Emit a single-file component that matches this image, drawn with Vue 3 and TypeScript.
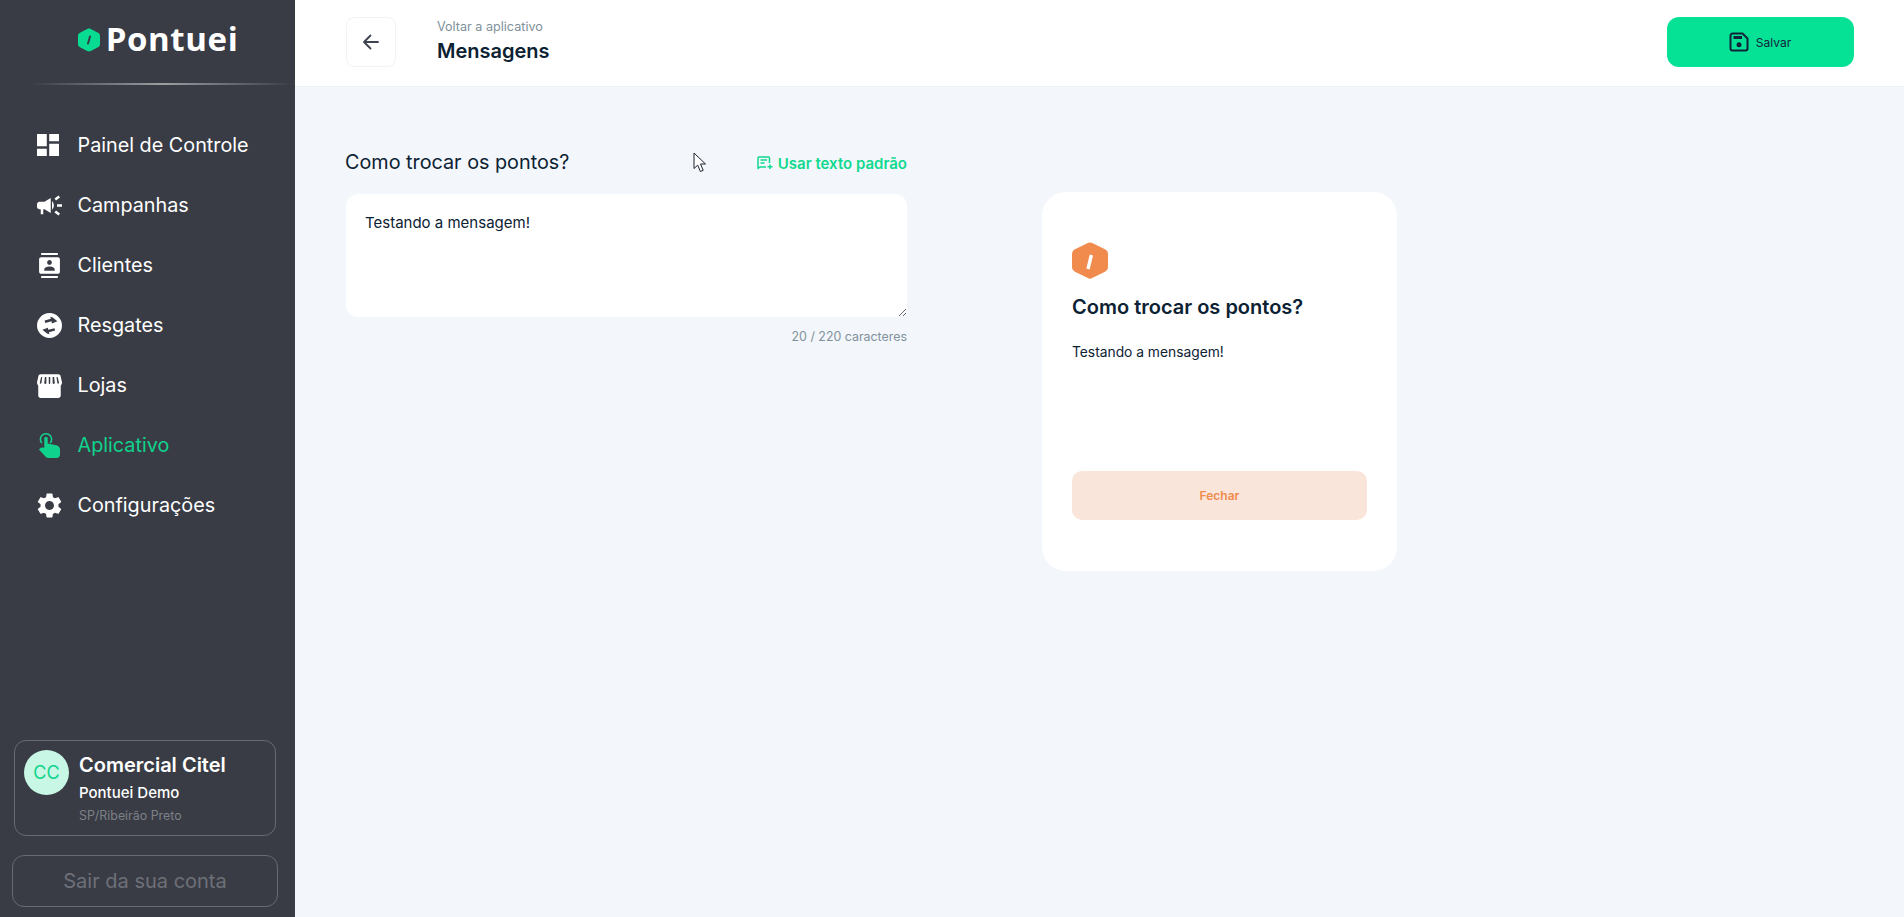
<script setup lang="ts">
import { ref, computed } from 'vue'

interface NavItem { label: string; d: string; box: string; size: number; active?: boolean }

const nav: NavItem[] = [
  { label: 'Painel de Controle', box: '3 3 18 18', size: 22, d: 'M3 13h8V3H3v10zm0 8h8v-6H3v6zm10 0h8V11h-8v10zm0-18v6h8V3h-8z' },
  { label: 'Campanhas', box: '2 2 20 20', size: 25, d: 'M18 11v2h4v-2h-4zm-2 6.61c.96.71 2.21 1.65 3.2 2.39.4-.53.8-1.07 1.2-1.6-.99-.74-2.24-1.68-3.2-2.4-.4.54-.8 1.08-1.2 1.61zM20.4 5.6c-.4-.53-.8-1.07-1.2-1.6-.99.74-2.24 1.68-3.2 2.4.4.53.8 1.07 1.2 1.6.96-.72 2.21-1.65 3.2-2.4zM4 9c-1.1 0-2 .9-2 2v2c0 1.1.9 2 2 2h1v4h2v-4h1l5 3V6L8 9H4zm11.5 3c0-1.33-.58-2.53-1.5-3.35v6.69c.92-.81 1.5-2.01 1.5-3.34z' },
  { label: 'Clientes', box: '2 0 20 24', size: 25, d: 'M20 0H4v2h16V0zM4 24h16v-2H4v2zM20 4H4c-1.1 0-2 .9-2 2v12c0 1.1.9 2 2 2h16c1.1 0 2-.9 2-2V6c0-1.1-.9-2-2-2zm-8 2.75c1.24 0 2.25 1.01 2.25 2.25s-1.01 2.25-2.25 2.25S9.75 10.24 9.75 9 10.76 6.75 12 6.75zM17 17H7v-1.5c0-1.67 3.33-2.5 5-2.5s5 .83 5 2.5V17z' },
  { label: 'Resgates', box: '2 2 20 20', size: 25, d: 'M12 2a10 10 0 1 0 0 20 10 10 0 0 0 0-20zm2.6 3.6 3.7 3-4.4 1.7-.3-1.7-5 1.3-.5-1.9 5-1.4-.5-1.600zM10 18.400l-3.700-3 4.400-1.700.3 1.700 5-1.300.5 1.900-5 1.400.5 1.600z' },
  { label: 'Lojas', box: '2 2 20 20', size: 25, d: 'M5 3h14c1 0 1.7.6 1.9 1.5l1 4.4c.3 1.3-.2 2.5-.9 3.2V20c0 1.1-.9 2-2 2H5c-1.100 0-2-.9-2-2v-7.900c-.7-.7-1.200-1.900-.9-3.200l1-4.400C3.300 3.600 4 3 5 3zm.3 2.200-1 4.200c-.1.500 0 1 .4 1.200.4 0 .8-.3.9-.8l.6-4.600H5.300zm3 0-.5 4.600c0 .5.300.9.800.9.500 0 .9-.4.900-1V5.200H8.300zm3.700 0h-.6V9.700c0 .6.200 1 .6 1s.6-.4.600-1V5.200H12zm2.500 0V9.700c0 .6.400 1 .9 1 .500 0 .800-.4.800-.9l-.5-4.600h-1.200zm3.100 0 .6 4.600c.1.500.5.800.9.800.4-.2.5-.7.400-1.200l-1-4.200h-.9z' },
  { label: 'Aplicativo', box: '0 0 21 25', size: 25, active: true, d: 'M7 0a6.300 6.300 0 0 1 4.700 10.500l-1.100-1A4.800 4.800 0 1 0 3.400 9.500l-1.100 1A6.300 6.300 0 0 1 7 0zM7 3.700c1 0 1.700.8 1.700 1.800v5.100l8.500 1.600c2.200.4 3.800 2 3.800 4.100V21.500c0 2-1.500 3.500-3.500 3.500H9.500c-1 0-1.900-.4-2.600-1.100L0 16.500l1.300-1.300c.7-.7 1.600-1 2.500-.7l1.500.3V5.500c0-1 .7-1.800 1.700-1.800z' },
  { label: 'Configurações', box: '2.500 2 19 20', size: 25, d: 'M19.140 12.940c.04-.3.06-.61.06-.94 0-.32-.02-.64-.07-.94l2.030-1.580c.18-.14.23-.41.12-.61l-1.920-3.320c-.12-.22-.37-.29-.59-.22l-2.390.96c-.5-.38-1.030-.7-1.620-.94l-.36-2.540c-.04-.24-.24-.41-.48-.41h-3.840c-.24 0-.43.17-.47.41l-.36 2.540c-.59.24-1.130.57-1.620.94l-2.390-.96c-.22-.08-.47 0-.59.22L2.740 8.870c-.12.21-.08.47.12.61l2.030 1.580c-.05.3-.09.63-.09.94s.02.64.07.94l-2.030 1.580c-.18.14-.23.41-.12.61l1.920 3.320c.12.22.37.29.59.22l2.390-.96c.5.38 1.030.7 1.620.94l.36 2.540c.05.24.24.41.48.41h3.840c.24 0 .44-.17.47-.41l.36-2.540c.59-.24 1.130-.56 1.620-.94l2.390.96c.22.08.47 0 .59-.22l1.920-3.320c.12-.22.07-.47-.12-.61l-2.010-1.580zM12 15.600c-1.980 0-3.600-1.620-3.600-3.600s1.620-3.600 3.600-3.600 3.600 1.620 3.600 3.600-1.620 3.600-3.600 3.600z' },
]

const message = ref('Testando a mensagem!')
const count = computed(() => message.value.length)
</script>

<template>
  <div class="page">
    <aside class="sidebar">
      <div class="brand">
        <svg class="brand-mark" width="22" height="24" viewBox="0 0 22 24">
          <path d="M9.200 1 2 4.800C.800 5.400 0 6.600 0 8v8c0 1.400.8 2.600 2 3.200L9.200 23c1.100.6 2.500.6 3.600 0l7.200-3.800c1.200-.6 2-1.800 2-3.200V8c0-1.400-.8-2.600-2-3.200L12.800 1c-1.100-.6-2.500-.6-3.600 0z" fill="#08dc92" />
          <path d="M12 8.500 10 15.500" stroke="#393c45" stroke-width="2" stroke-linecap="round" />
        </svg>
        <span class="brand-name">Pontuei</span>
      </div>
      <div class="brand-rule"></div>

      <nav class="nav">
        <a v-for="item in nav" :key="item.label" class="nav-item" :class="{ active: item.active }">
          <span class="nav-icon">
            <svg :width="item.size" :height="item.size" :viewBox="item.box" fill="currentColor">
              <path :d="item.d" fill-rule="evenodd" />
            </svg>
          </span>
          <span>{{ item.label }}</span>
        </a>
      </nav>

      <div class="account">
        <div class="user-card">
          <div class="avatar">CC</div>
          <div class="user-info">
            <div class="user-name">Comercial Citel</div>
            <div class="user-org">Pontuei Demo</div>
            <div class="user-place">SP/Ribeirão Preto</div>
          </div>
        </div>
        <button class="logout" type="button">Sair da sua conta</button>
      </div>
    </aside>

    <div class="content">
      <header class="topbar">
        <button class="back" type="button" aria-label="Voltar">
          <svg width="20" height="20" viewBox="0 0 20 20" fill="none" stroke="#3d4450" stroke-width="1.800" stroke-linecap="round" stroke-linejoin="round">
            <path d="M17 10H3.500M9.500 3.500 3 10l6.500 6.500" />
          </svg>
        </button>
        <div class="crumbs">
          <div class="crumb">Voltar a aplicativo</div>
          <h1 class="page-title">Mensagens</h1>
        </div>
        <button class="save" type="button">
          <svg width="20" height="20" viewBox="0 0 20 20" fill="none">
            <path d="M3.500 1.500h10l5 5v10a2 2 0 0 1-2 2h-13a2 2 0 0 1-2-2v-13a2 2 0 0 1 2-2z" stroke="#10243a" stroke-width="2" stroke-linejoin="round" />
            <rect x="4.500" y="4" width="8.500" height="3" fill="#10243a" />
            <circle cx="10" cy="12.800" r="2.500" fill="#10243a" />
          </svg>
          <span>Salvar</span>
        </button>
      </header>

      <main class="main">
        <section class="editor">
          <div class="editor-head">
            <h2 class="editor-title">Como trocar os pontos?</h2>
            <a class="default-link">
              <svg width="16" height="14" viewBox="0 0 16 14" fill="none" stroke="currentColor" stroke-width="1.500">
                <path d="M12.500 7V2a1 1 0 0 0-1-1H2a1 1 0 0 0-1 1v10.500L3 11h6" stroke-linejoin="round" />
                <path d="M3.500 4h6.500M3.500 7h4M13 8.500v4.500M10.500 10.800h5" />
              </svg>
              <span>Usar texto padrão</span>
            </a>
          </div>
          <textarea v-model="message" class="message" maxlength="220"></textarea>
          <div class="counter">{{ count }} / 220 caracteres</div>
        </section>

        <section class="preview">
          <svg class="preview-mark" width="36" height="37" viewBox="0 0 36 37">
            <path d="M15.800.9 3 7.300C1.200 8.200 0 10 0 12v13c0 2 1.200 3.800 3 4.700l12.800 6.400c1.400.7 3 .7 4.400 0L33 29.700c1.800-.9 3-2.700 3-4.700V12c0-2-1.200-3.800-3-4.700L20.200.9c-1.400-.7-3-.7-4.400 0z" fill="#f08b4d" />
            <path d="M19.400 13 16 27" stroke="#fff" stroke-width="3.400" />
          </svg>
          <h3 class="preview-title">Como trocar os pontos?</h3>
          <p class="preview-text">{{ message }}</p>
          <button class="close" type="button">Fechar</button>
        </section>
      </main>
    </div>

    <svg class="pointer" width="14" height="21" viewBox="0 0 14 21">
      <path d="M1 1v15.500l3.700-3.400 2.700 6.400 2.800-1.200-2.700-6.300h5L1 1z" fill="#fff" stroke="#1d2230" stroke-width="1" stroke-linejoin="round" />
    </svg>
  </div>
</template>

<style>
html, body { margin: 0; background: #f3f6fa; }
</style>

<style scoped>
.page {
  position: relative;
  display: flex;
  width: 1904px;
  height: 917px;
  overflow: hidden;
  font-family: Inter, "Liberation Sans", sans-serif;
  color: #0c2233;
  background: #f3f6fa;
}

.sidebar {
  flex: 0 0 295px;
  display: flex;
  flex-direction: column;
  background: #393c45;
  color: #fff;
}
.brand {
  height: 83px;
  display: flex;
  align-items: center;
  justify-content: center;
  gap: 6px;
  padding-left: 21px;
  padding-bottom: 5px;
  box-sizing: border-box;
}
.brand-mark { margin-top: 2px; }
.brand-name {
  font-family: "Open Sans", sans-serif;
  font-weight: 700;
  font-size: 33px;
  line-height: 40px;
  letter-spacing: 0.6px;
}
.brand-rule {
  height: 2px;
  margin-left: 30px;
  background: linear-gradient(90deg, rgba(255,255,255,0), rgba(255,255,255,.5) 50%, rgba(255,255,255,0));
}
.nav {
  display: flex;
  flex-direction: column;
  margin-top: 30px;
}
.nav-item {
  height: 60px;
  display: flex;
  align-items: center;
  padding-left: 37px;
  font-size: 19.8px;
  line-height: 24px;
  color: #fff;
}
.nav-item.active { color: #0fd38c; }
.nav-icon {
  width: 40.500px;
  display: flex;
  align-items: center;
  box-sizing: border-box;
}
.account {
  margin-top: auto;
  padding: 0 17px 10px 12px;
  display: flex;
  flex-direction: column;
  gap: 19px;
}
.user-card {
  margin: 0 2px;
  height: 96px;
  box-sizing: border-box;
  display: flex;
  gap: 10px;
  padding: 9px;
  border: 1px solid #666a72;
  border-radius: 12px;
}
.avatar {
  flex: 0 0 45px;
  height: 45px;
  border-radius: 50%;
  background: #c8f7e6;
  color: #0fd38c;
  font-size: 18px;
  line-height: 45px;
  text-align: center;
}
.user-info { padding-top: 3px; }
.user-name {
  font-size: 20px;
  line-height: 24px;
  font-weight: 600;
}
.user-org {
  margin-top: 6px;
  font-size: 15px;
  line-height: 20px;
  font-weight: 500;
}
.user-place {
  margin-top: 5px;
  font-size: 12.4px;
  line-height: 16px;
  color: #7d8088;
}
.logout {
  height: 52px;
  background: transparent;
  border: 1px solid #666a72;
  border-radius: 12px;
  color: #6d7078;
  font-family: inherit;
  font-size: 20px;
  padding: 0;
}

.content {
  flex: 1;
  display: flex;
  flex-direction: column;
  min-width: 0;
}
.topbar {
  height: 87px;
  box-sizing: border-box;
  display: flex;
  align-items: center;
  padding: 0 50px 2px 51px;
  background: #fff;
  border-bottom: 1px solid #eef1f4;
}
.back {
  width: 50px;
  height: 50px;
  display: flex;
  align-items: center;
  justify-content: center;
  background: #fff;
  border: 1px solid #f1f3f5;
  border-radius: 8px;
  padding: 0;
}
.crumbs {
  margin-left: 41px;
  padding-bottom: 1px;
}
.crumb {
  font-size: 12.6px;
  line-height: 16px;
  color: #7f919c;
}
.page-title {
  margin: 3px 0 0;
  font-size: 20px;
  line-height: 26px;
  font-weight: 600;
}
.save {
  margin-left: auto;
  width: 187px;
  height: 50px;
  display: flex;
  align-items: center;
  justify-content: center;
  gap: 7px;
  background: #06e295;
  border: 0;
  border-radius: 12px;
  color: #10243a;
  font-family: inherit;
  font-size: 12px;
  padding: 0 1px 0 0;
}

.main {
  flex: 1;
  display: flex;
  align-items: flex-start;
  gap: 135px;
  padding: 59px 0 0 51px;
}
.editor { width: 561px; }
.editor-head {
  display: flex;
  align-items: center;
  justify-content: space-between;
  height: 32px;
  margin-bottom: 16px;
}
.editor-title {
  margin: 0 0 0 -1px;
  font-size: 19.8px;
  line-height: 28px;
  font-weight: 400;
}
.default-link {
  display: flex;
  align-items: center;
  gap: 5px;
  padding-top: 2px;
  font-size: 15px;
  font-weight: 600;
  color: #0fd98f;
}
.message {
  display: block;
  width: 100%;
  height: 123px;
  box-sizing: border-box;
  padding: 19px;
  background: #fff;
  border: 0;
  border-radius: 12px;
  outline: none;
  font-family: inherit;
  font-size: 15px;
  line-height: 20px;
  color: #0c2233;
}
.counter {
  margin-top: 12px;
  text-align: right;
  font-size: 12.4px;
  line-height: 16px;
  color: #7f919c;
}
.preview {
  width: 355px;
  height: 379px;
  box-sizing: border-box;
  margin-top: 46px;
  padding: 50px 30px 0;
  background: #fff;
  border-radius: 24px;
  display: flex;
  flex-direction: column;
}
.preview-mark { display: block; }
.preview-title {
  margin: 14px 0 0;
  font-size: 20px;
  line-height: 28px;
  font-weight: 600;
}
.preview-text {
  margin: 21px 0 0;
  font-size: 13.8px;
  line-height: 20px;
}
.close {
  margin-top: 109px;
  height: 49px;
  background: #fae5da;
  border: 0;
  border-radius: 10px;
  color: #f08b4d;
  font-family: inherit;
  font-size: 12px;
  font-weight: 600;
  padding: 0;
}
.pointer {
  position: absolute;
  left: 693px;
  top: 152px;
}
</style>
